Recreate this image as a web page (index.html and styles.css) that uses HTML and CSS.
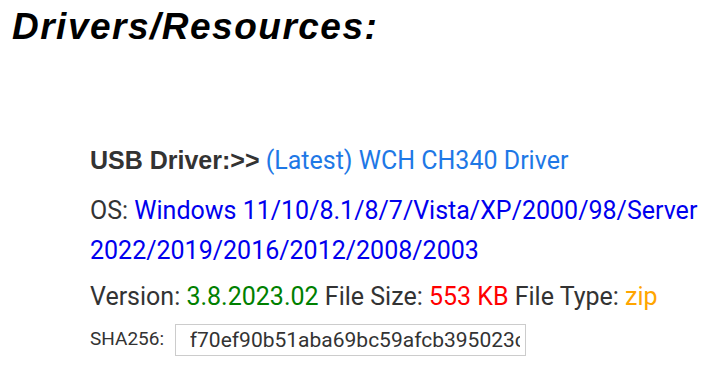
FILE: index.html
```html
<!DOCTYPE html>
<html>
<head>
  <title>Drivers/Resources</title>
  <meta name="viewport" content="width=device-width, initial-scale=1.0">
  <link rel="stylesheet" href="styles.css">
</head>
<body>
  <h1 class="title">Drivers/Resources:</h1>

  <div class="driver">
    <p class="driver-name"><strong>USB Driver:&gt;&gt;</strong> <a href="#">(Latest) WCH CH340 Driver</a></p>
    <p class="os">OS: <span class="os-list">Windows 11/10/8.1/8/7/Vista/XP/2000/98/Server 2022/2019/2016/2012/2008/2003</span></p>
    <p class="meta">Version: <span class="version">3.8.2023.02</span> File Size: <span class="size">553 KB</span> File Type: <span class="type">zip</span></p>
    <p class="hash">SHA256: <input type="text" class="hash-box" value="f70ef90b51aba69bc59afcb395023c7a4f1e2d9c8b6a5e3f0d1c2b4a69e8f7d01" readonly></p>
  </div>
</body>
</html>
```

FILE: styles.css
```css
body {
  font-family: Roboto, "Liberation Sans", sans-serif;
  margin: 0;
  padding: 6px 8px 8px;
  color: #333;
}

.title {
  font-family: "Liberation Sans", Arial, sans-serif;
  font-style: italic;
  font-weight: bold;
  font-size: 37px;
  letter-spacing: 1.5px;
  line-height: 42px;
  color: #000;
  margin: 0 0 0 4px;
}

.driver {
  padding: 92px 0 0 82px;
  font-size: 25px;
}

.driver p {
  margin: 0;
  line-height: 40px;
}

.driver .driver-name {
  margin-bottom: 10px;
}

.driver .os {
  margin-bottom: 6px;
}

.driver-name strong {
  font-family: "Liberation Sans", Arial, sans-serif;
  font-weight: bold;
}

a {
  text-decoration: none;
  color: #1e78e6;
}

.os-list {
  color: #0000ee;
}

.version {
  color: #008000;
}

.size {
  color: #ff0000;
}

.type {
  color: #ffa500;
}

.driver .hash {
  font-size: 19px;
  line-height: 44px;
}

.hash-box {
  width: 351px;
  height: 32px;
  padding: 0 5px 0 14px;
  box-sizing: border-box;
  border: 1px solid #ccc;
  font-family: Roboto, sans-serif;
  font-size: 21px;
  color: #333;
  margin-left: 6px;
  vertical-align: middle;
}
```
